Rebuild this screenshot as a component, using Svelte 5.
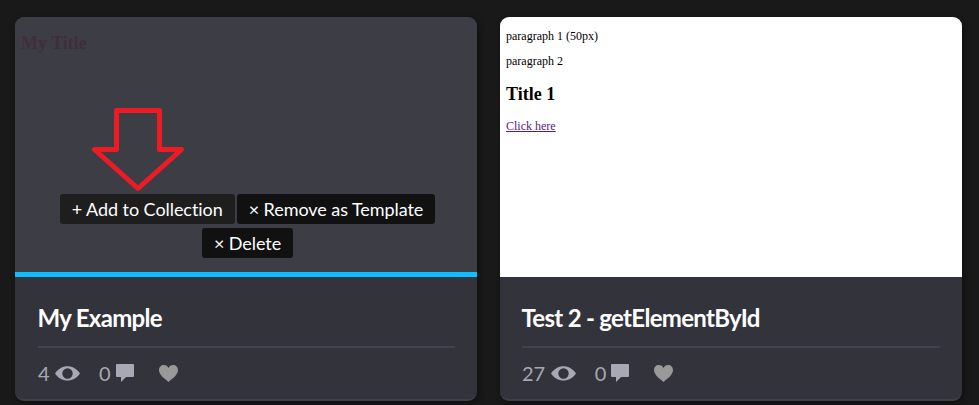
<script lang="ts">
  type Item = {
    title: string;
    views: number;
    comments: number;
    active: boolean;
  };

  const items: Item[] = [
    { title: 'My Example', views: 4, comments: 0, active: true },
    { title: 'Test 2 - getElementById', views: 27, comments: 0, active: false },
  ];
</script>

<main class="grid">
  {#each items as item}
    <article class="card">
      {#if item.active}
        <div class="preview active">
          <h2 class="faded">My Title</h2>
          <div class="actions">
            <div class="row">
              <button class="action hover">+ Add to Collection</button>
              <button class="action">× Remove as Template</button>
            </div>
            <div class="row">
              <button class="action">× Delete</button>
            </div>
          </div>
          <svg class="arrow" width="94" height="84" viewBox="0 0 94 84" aria-hidden="true">
            <path d="M25.500 2.500H68.500V41.500H90.500L47 80.500L3.500 41.500H25.500Z" />
          </svg>
        </div>
      {:else}
        <div class="preview">
          <p>paragraph 1 (50px)</p>
          <p>paragraph 2</p>
          <h2>Title 1</h2>
          <a href="#top">Click here</a>
        </div>
      {/if}
      <div class="details">
        <h3>{item.title}</h3>
        <div class="stats">
          <span class="stat views">
            <span>{item.views}</span>
            <svg width="25" height="15" viewBox="0 0 25 15" aria-hidden="true">
              <path
                fill-rule="evenodd"
                d="M0 7.500C3 3 7.500.300 12.500.300S22 3 25 7.500C22 12 17.500 14.500 12.500 14.500S3 12 0 7.500ZM12.500 2.300A5.200 5.200 0 1 0 12.500 12.700A5.200 5.200 0 1 0 12.500 2.300Z"
              />
            </svg>
          </span>
          <span class="stat comments">
            <span>{item.comments}</span>
            <svg width="18" height="18" viewBox="0 0 18 18" aria-hidden="true">
              <path d="M1 0H17Q18 0 18 1V12Q18 13 17 13H10L5 18V13H1Q0 13 0 12V1Q0 0 1 0Z" />
            </svg>
          </span>
          <svg class="heart" width="19" height="17" viewBox="0 0 19 17" aria-hidden="true">
            <path
              d="M9.500 17C7 14.500 0 10.500 0 5C0 2 2.200 0 4.900 0C7 0 8.700 1.100 9.500 3C10.300 1.100 12 0 14.100 0C16.800 0 19 2 19 5C19 10.500 12 14.500 9.500 17Z"
            />
          </svg>
        </div>
      </div>
    </article>
  {/each}
</main>

<style>
  :global(body) {
    background: #191919;
    overflow: hidden;
  }
  .grid {
    display: grid;
    grid-template-columns: 462px 462px;
    gap: 23px;
    box-sizing: border-box;
    height: 405px;
    padding: 17px 15px 4px;
    font-family: Lato, sans-serif;
  }
  .card {
    display: flex;
    flex-direction: column;
    box-sizing: border-box;
    height: 384px;
    overflow: hidden;
    border-bottom: 2px solid #3d3f4b;
    border-radius: 9px;
    background: #33333c;
    box-shadow: 2px 2px 6px rgba(0, 0, 0, 0.4);
  }
  .preview {
    position: relative;
    box-sizing: border-box;
    height: 260px;
    flex: none;
    padding: 12px 6px 0;
    background: #fff;
    color: #000;
    font-family: 'Liberation Serif', serif;
    font-size: 12px;
    line-height: 14px;
  }
  .preview p {
    margin: 0 0 11px;
  }
  .preview h2 {
    margin: 16px 0 15px;
    font-size: 18px;
    line-height: 20px;
  }
  .preview a {
    color: #551a8b;
  }
  .active {
    display: flex;
    flex-direction: column;
    justify-content: space-between;
    padding: 16px 6px 14px;
    border-bottom: 5px solid #0ebeff;
    background: #3d3d46;
  }
  .active .faded {
    margin: 0;
    color: #402f38;
  }
  .actions {
    display: flex;
    flex-direction: column;
    gap: 4px;
    margin: 0 -6px;
    padding-left: 3px;
  }
  .row {
    display: flex;
    justify-content: center;
    gap: 2px;
  }
  .action {
    height: 30px;
    padding: 0 12px;
    border: 0;
    border-radius: 3px;
    background: #111;
    color: #fff;
    font: 18px/30px Lato, sans-serif;
    letter-spacing: -0.06px;
    white-space: nowrap;
  }
  .hover {
    background: #1e1e1e;
  }
  .arrow {
    position: absolute;
    top: 91px;
    left: 76px;
    fill: none;
    stroke: #ed1c24;
    stroke-width: 5;
    stroke-linejoin: round;
  }
  .details {
    padding: 25px 22px 0 23px;
  }
  .card:last-child .details {
    padding-left: 22px;
  }
  h3 {
    margin: 0 0 0 -0.5px;
    height: 44px;
    border-bottom: 2px solid #42424f;
    color: #fff;
    font-size: 24px;
    line-height: 32px;
    letter-spacing: -0.7px;
  }
  .stats {
    display: flex;
    align-items: center;
    height: 50px;
    color: #a6a8b3;
    font-size: 20px;
    line-height: 24px;
  }
  .stat {
    display: flex;
    align-items: center;
    gap: 5px;
  }
  .views {
    gap: 5.5px;
  }
  .comments {
    margin-left: 19px;
  }
  .stats svg {
    fill: #a6a8b3;
  }
  .stats .heart {
    margin-left: 25px;
    fill: #999;
  }
</style>
